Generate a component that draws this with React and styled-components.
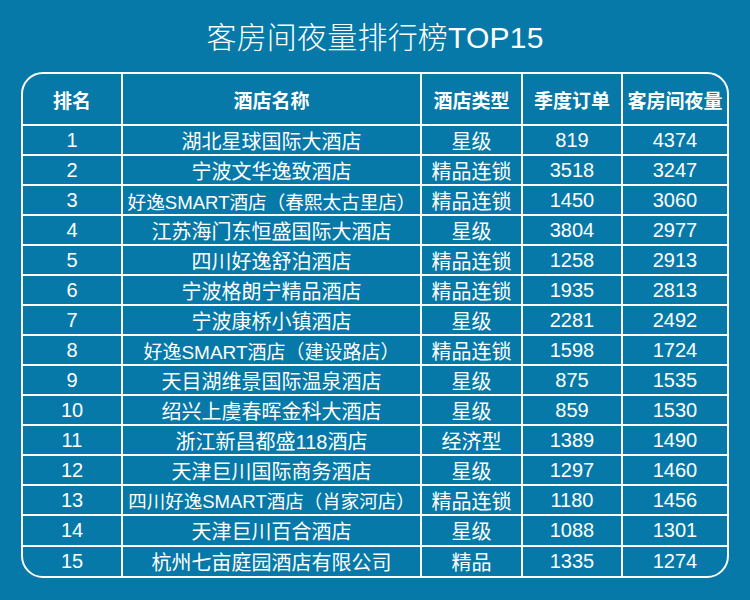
import React from 'react';
import styled, { createGlobalStyle } from 'styled-components';

const GlobalStyle = createGlobalStyle`
  html, body {
    margin: 0;
    padding: 0;
    background: #0679a8;
  }
  body {
    font-family: 'Liberation Sans', 'Noto Sans CJK SC', sans-serif;
    color: #fff;
  }
`;

const Page = styled.div`
  width: 750px;
  height: 600px;
  background: #0679a8;
  padding: 0 21px;
  box-sizing: border-box;
  overflow: hidden;
`;

const Title = styled.h1`
  margin: 0;
  height: 72px;
  display: flex;
  align-items: center;
  justify-content: center;
  padding-bottom: 2px;
  box-sizing: border-box;
  font-size: 30px;
  font-weight: 300;
  letter-spacing: 0.2px;
`;

const Table = styled.div`
  display: grid;
  grid-template-columns: 100px 299px 101px 100px 104px;
  border: 2px solid #fff;
  border-radius: 22px;
  overflow: hidden;
  width: 708px;
  box-sizing: border-box;
`;

const Cell = styled.div`
  height: ${(p) => (p.$head ? '50px' : p.$tall ? '29px' : '28px')};
  display: flex;
  align-items: center;
  justify-content: center;
  white-space: nowrap;
  font-size: ${(p) => p.$size || (p.$head ? 19 : 20)}px;
  font-weight: ${(p) => (p.$head ? 700 : 400)};
  border-right: ${(p) => (p.$last ? 'none' : '2px solid #fff')};
  border-bottom: ${(p) => (p.$bottom ? 'none' : '2px solid #fff')};
  color: #fff;
`;

const headers = ['排名', '酒店名称', '酒店类型', '季度订单', '客房间夜量'];

// last value: smaller font for the long names so they fit the column
const rows = [
  ['湖北星球国际大酒店', '星级', 819, 4374],
  ['宁波文华逸致酒店', '精品连锁', 3518, 3247],
  ['好逸SMART酒店（春熙太古里店）', '精品连锁', 1450, 3060, 18.6],
  ['江苏海门东恒盛国际大酒店', '星级', 3804, 2977],
  ['四川好逸舒泊酒店', '精品连锁', 1258, 2913],
  ['宁波格朗宁精品酒店', '精品连锁', 1935, 2813],
  ['宁波康桥小镇酒店', '星级', 2281, 2492],
  ['好逸SMART酒店（建设路店）', '精品连锁', 1598, 1724, 19],
  ['天目湖维景国际温泉酒店', '星级', 875, 1535],
  ['绍兴上虞春晖金科大酒店', '星级', 859, 1530],
  ['浙江新昌都盛118酒店', '经济型', 1389, 1490],
  ['天津巨川国际商务酒店', '星级', 1297, 1460],
  ['四川好逸SMART酒店（肖家河店）', '精品连锁', 1180, 1456, 18.5],
  ['天津巨川百合酒店', '星级', 1088, 1301],
  ['杭州七亩庭园酒店有限公司', '精品', 1335, 1274],
];

export default function App() {
  return (
    <Page>
      <GlobalStyle />
      <Title>客房间夜量排行榜TOP15</Title>
      <Table>
        {headers.map((h, i) => (
          <Cell key={h} $head $last={i === 4}>
            {h}
          </Cell>
        ))}
        {rows.map(([name, type, orders, nights, size], r) => {
          const bottom = r === rows.length - 1;
          const tall = r >= rows.length - 2;
          const values = [r + 1, name, type, orders, nights];
          return values.map((v, i) => (
            <Cell
              key={`${r}-${i}`}
              $last={i === 4}
              $bottom={bottom}
              $tall={tall}
              $size={i === 1 ? size : undefined}
            >
              {v}
            </Cell>
          ));
        })}
      </Table>
    </Page>
  );
}
